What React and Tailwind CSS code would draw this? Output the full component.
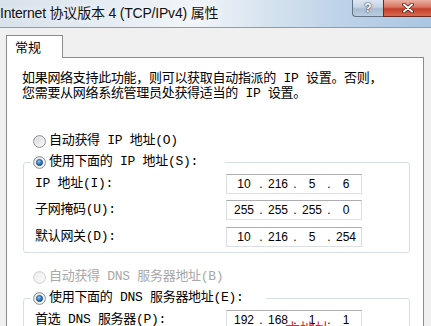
import React from "react";

const LABEL_FONT = "font-['Liberation_Mono','Noto_Sans_CJK_SC',monospace] tracking-[-0.3px]";

function Radio({ checked, disabled }) {
  return (
    <svg width="13" height="13" viewBox="0 0 13 13" className="shrink-0">
      <defs>
        <linearGradient id="rbg" x1="0" y1="0" x2="1" y2="1">
          <stop offset="0" stopColor="#cfd0d2" />
          <stop offset="1" stopColor="#ffffff" />
        </linearGradient>
        <linearGradient id="rbgd" x1="0" y1="0" x2="1" y2="1">
          <stop offset="0" stopColor="#ececec" />
          <stop offset="1" stopColor="#fbfbfb" />
        </linearGradient>
        <radialGradient id="rdot" cx="0.4" cy="0.35" r="0.7">
          <stop offset="0" stopColor="#8ccdf5" />
          <stop offset="0.6" stopColor="#2a78c0" />
          <stop offset="1" stopColor="#0d3c6c" />
        </radialGradient>
      </defs>
      <circle
        cx="6.5"
        cy="6.5"
        r="5.9"
        fill={disabled ? "url(#rbgd)" : "url(#rbg)"}
        stroke={disabled ? "#d0d0d0" : "#8e9094"}
        strokeWidth="1"
      />
      {!disabled && <circle cx="6.5" cy="6.5" r="4.4" fill="none" stroke="#f4f4f4" strokeWidth="1" />}
      {checked && (
        <circle cx="6.5" cy="6.5" r="3.1" fill="url(#rdot)" stroke="#1c4f80" strokeWidth="0.7" />
      )}
    </svg>
  );
}

function IpBox({ parts, children }) {
  return (
    <div className="relative flex h-[20px] w-[136px] items-center overflow-hidden border border-[#dcdfe6] border-t-[#abadb3] bg-white pl-[2px] font-['Liberation_Sans',sans-serif] text-[12px] text-black">
      <span className="w-[30px] text-center">{parts[0]}</span>
      <span className="w-[4px] text-center">.</span>
      <span className="w-[30px] text-center">{parts[1]}</span>
      <span className="w-[4px] text-center">.</span>
      <span className="w-[30px] text-center">{parts[2]}</span>
      <span className="w-[4px] text-center">.</span>
      <span className="w-[30px] text-center">{parts[3]}</span>
      {children}
    </div>
  );
}

function Row({ label, parts, className = "", children }) {
  return (
    <div className={`flex h-[20px] items-center pl-[11px] ${className}`}>
      <span className={`w-[191px] ${LABEL_FONT} text-[13px] leading-[14px] text-black`}>{label}</span>
      <IpBox parts={parts}>{children}</IpBox>
    </div>
  );
}

function RadioLabel({ checked, disabled, children }) {
  return (
    <div className="flex h-[14px] items-center gap-[3px]">
      <Radio checked={checked} disabled={disabled} />
      <span
        className={`${LABEL_FONT} whitespace-nowrap text-[13px] leading-[14px] ${
          disabled ? "text-[#a8a8a8]" : "text-black"
        }`}
      >
        {children}
      </span>
    </div>
  );
}

export default function App() {
  return (
    <div className="h-[326px] w-[431px] overflow-hidden bg-[#f0f0f0]">
      {/* Title bar */}
      <div className="relative flex h-[28px] items-center border-b border-[#8e9cab] bg-[linear-gradient(90deg,#d8e2eb_0%,#e8eef4_30%,#f1f5f9_45%,#d6e3ef_62%,#bcd2e8_80%,#aac6e2_100%)]">
        <span className="pb-[2px] pl-0 font-['Liberation_Sans','Noto_Sans_CJK_SC',sans-serif] text-[14px] leading-[16px] tracking-[-0.2px] text-[#111] [text-shadow:0_0_6px_#ffffff]">
          Internet 协议版本 4 (TCP/IPv4) 属性
        </span>
        {/* caption buttons overlay the title bar */}
        <div className="absolute right-0 top-0 flex h-[17px]">
          <div className="flex w-[31px] items-center justify-center rounded-bl-[4px] border border-t-0 border-r-0 border-[#5f7286] bg-[linear-gradient(180deg,#dbe6f1_0%,#c4d3e3_45%,#a9bdd2_55%,#b9cde0_100%)]">
            <span className="font-['Liberation_Sans',sans-serif] text-[12px] font-bold leading-[12px] text-white [text-shadow:0_0_2px_#1f3652,0_0_1px_#1f3652]">
              ?
            </span>
          </div>
          <div className="flex w-[48px] items-center justify-center border-l border-b border-[#6a2a22] bg-[linear-gradient(180deg,#eab1a3_0%,#d8735e_45%,#c2402c_55%,#d9684c_100%)]">
            <svg width="12" height="10" viewBox="0 0 12 10">
              <path d="M2 1.5 L10 8.5 M10 1.5 L2 8.5" stroke="#4a1a14" strokeWidth="3.6" strokeLinecap="round" />
              <path d="M2 1.5 L10 8.5 M10 1.5 L2 8.5" stroke="#ffffff" strokeWidth="2" strokeLinecap="round" />
            </svg>
          </div>
        </div>
      </div>

      {/* Body */}
      <div className="pt-[7px]">
        {/* Tab */}
        <div className="relative z-10 -mb-px ml-[6px] flex h-[23px] w-[57px] items-start border border-b-0 border-[#898c95] bg-white pl-[8px] pt-[3px]">
          <span className="font-['Noto_Sans_CJK_SC',sans-serif] text-[13px] leading-[16px] text-black">常规</span>
        </div>

        {/* Tab panel */}
        <div className="ml-[6px] h-[300px] w-[418px] border border-[#898c95] bg-white pl-[15px] pt-[13px]">
          <p className={`${LABEL_FONT} whitespace-nowrap text-[13px] leading-[15px] text-black`}>
            如果网络支持此功能，则可以获取自动指派的 IP 设置。否则，
            <br />
            您需要从网络系统管理员处获得适当的 IP 设置。
          </p>

          <div className="-ml-[15px] pl-[16px]">
            <div className="mt-[33px] pl-[10px]">
              <RadioLabel>自动获得 IP 地址(O)</RadioLabel>
            </div>

            <fieldset className="mt-[7px] w-[387px] rounded-[3px] border border-[#d5dfe5] pb-[5px]">
              <legend className="ml-[7px] px-[2px] pr-[27px]">
                <RadioLabel checked>使用下面的 IP 地址(S):</RadioLabel>
              </legend>
              <div className="pt-[5px]">
                <Row label="IP 地址(I):" parts={["10", "216", "5", "6"]} />
                <Row className="mt-[6px]" label="子网掩码(U):" parts={["255", "255", "255", "0"]} />
                <Row className="mt-[7px]" label="默认网关(D):" parts={["10", "216", "5", "254"]} />
              </div>
            </fieldset>

            <div className="mt-[17px] pl-[10px]">
              <RadioLabel disabled>自动获得 DNS 服务器地址(B)</RadioLabel>
            </div>

            <fieldset className="mt-[7px] w-[387px] rounded-[3px] border border-[#d5dfe5] pb-[5px]">
              <legend className="ml-[7px] px-[2px] pr-[22px]">
                <RadioLabel checked>使用下面的 DNS 服务器地址(E):</RadioLabel>
              </legend>
              <div className="pt-[5px]">
                <Row label="首选 DNS 服务器(P):" parts={["192", "168", "1", "1"]}>
                  <span className="absolute left-[58px] top-[9px] font-['Noto_Sans_CJK_SC',sans-serif] text-[15px] leading-[16px] text-[#e3262b]">
                    本地址
                  </span>
                </Row>
              </div>
            </fieldset>
          </div>
        </div>
      </div>
    </div>
  );
}
